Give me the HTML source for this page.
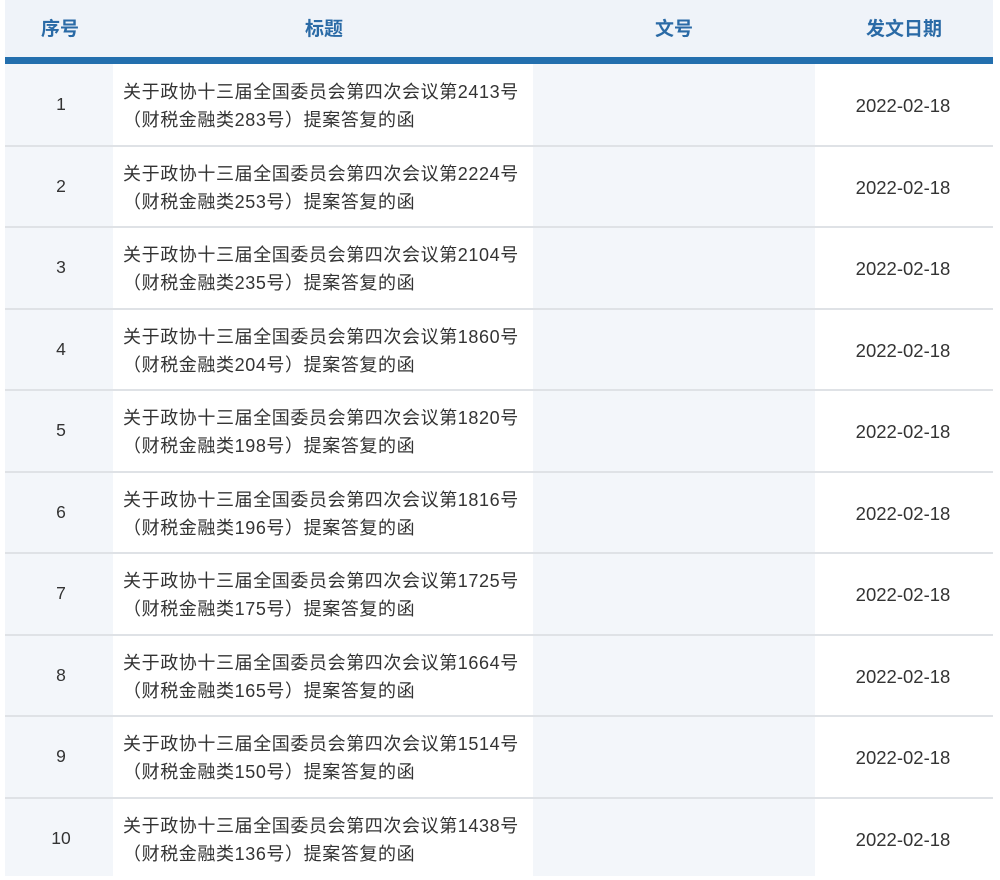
<!DOCTYPE html>
<html><head><meta charset="utf-8"><style>
*{margin:0;padding:0;box-sizing:border-box}
body{width:1000px;height:876px;background:#fff;position:relative;overflow:hidden;font-family:"Liberation Sans","Noto Sans CJK SC",sans-serif;color:#333}
.hd{position:absolute;left:5px;top:0;width:988px;height:57px;background:#eff3f9}
.bar{position:absolute;left:5px;top:57px;width:988px;height:7px;background:#236fae}
.h{position:absolute;top:14px;font-size:19px;font-weight:bold;color:#2a6aa6;transform:translateX(-50%);white-space:nowrap}
.c1{position:absolute;left:5px;top:64px;width:108px;height:812px;background:#f3f6fa}
.c3{position:absolute;left:533px;top:64px;width:282px;height:812px;background:#f3f6fa}
.r{position:absolute;left:0;width:1000px;height:82px}
.sep{position:absolute;left:5px;top:-1px;width:988px;height:2px;background:#dfe2e6}
.n{position:absolute;left:61px;top:30px;font-size:17.5px;transform:translateX(-50%)}
.t{position:absolute;left:123px;top:14px;font-size:18px;line-height:28px;letter-spacing:0.6px;white-space:nowrap}
.d{position:absolute;left:903px;top:31px;font-size:18.5px;transform:translateX(-50%)}
</style></head><body>
<div class="hd"></div><div class="bar"></div>
<div class="h" style="left:60px">序号</div>
<div class="h" style="left:324px">标题</div>
<div class="h" style="left:674px">文号</div>
<div class="h" style="left:904px">发文日期</div>
<div class="c1"></div><div class="c3"></div>
<div class="r" style="top:64px"><div class="n">1</div><div class="t">关于政协十三届全国委员会第四次会议第2413号<br>（财税金融类283号）提案答复的函</div><div class="d">2022-02-18</div></div>
<div class="r" style="top:145.5px"><div class="sep"></div><div class="n">2</div><div class="t">关于政协十三届全国委员会第四次会议第2224号<br>（财税金融类253号）提案答复的函</div><div class="d">2022-02-18</div></div>
<div class="r" style="top:227px"><div class="sep"></div><div class="n">3</div><div class="t">关于政协十三届全国委员会第四次会议第2104号<br>（财税金融类235号）提案答复的函</div><div class="d">2022-02-18</div></div>
<div class="r" style="top:308.5px"><div class="sep"></div><div class="n">4</div><div class="t">关于政协十三届全国委员会第四次会议第1860号<br>（财税金融类204号）提案答复的函</div><div class="d">2022-02-18</div></div>
<div class="r" style="top:390px"><div class="sep"></div><div class="n">5</div><div class="t">关于政协十三届全国委员会第四次会议第1820号<br>（财税金融类198号）提案答复的函</div><div class="d">2022-02-18</div></div>
<div class="r" style="top:471.5px"><div class="sep"></div><div class="n">6</div><div class="t">关于政协十三届全国委员会第四次会议第1816号<br>（财税金融类196号）提案答复的函</div><div class="d">2022-02-18</div></div>
<div class="r" style="top:553px"><div class="sep"></div><div class="n">7</div><div class="t">关于政协十三届全国委员会第四次会议第1725号<br>（财税金融类175号）提案答复的函</div><div class="d">2022-02-18</div></div>
<div class="r" style="top:634.5px"><div class="sep"></div><div class="n">8</div><div class="t">关于政协十三届全国委员会第四次会议第1664号<br>（财税金融类165号）提案答复的函</div><div class="d">2022-02-18</div></div>
<div class="r" style="top:716px"><div class="sep"></div><div class="n">9</div><div class="t">关于政协十三届全国委员会第四次会议第1514号<br>（财税金融类150号）提案答复的函</div><div class="d">2022-02-18</div></div>
<div class="r" style="top:797.5px"><div class="sep"></div><div class="n">10</div><div class="t">关于政协十三届全国委员会第四次会议第1438号<br>（财税金融类136号）提案答复的函</div><div class="d">2022-02-18</div></div>
</body></html>
